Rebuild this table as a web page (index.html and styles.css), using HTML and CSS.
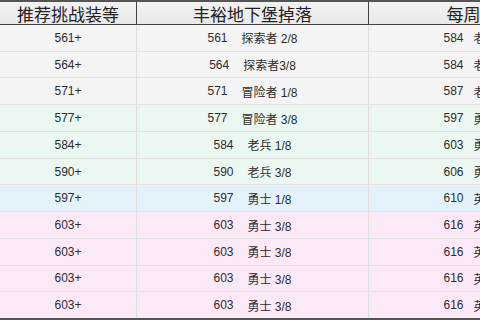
FILE: index.html
```html
<!DOCTYPE html>
<html lang="zh-CN">
<head>
<meta charset="utf-8">
<title>地下堡装等</title>
<link rel="stylesheet" href="styles.css">
</head>
<body>
<div class="table">
  <div class="head">
    <div class="hcell">推荐挑战装等</div>
    <div class="hcell">丰裕地下堡掉落</div>
    <div class="hcell">每周宝库</div>
  </div>
  <div class="row grey"><div class="cell">561+</div><div class="cell"><span class="num">561</span><span class="tier">探索者 2/8</span></div><div class="cell c3"><span class="num">584</span><span class="tier t3">老兵 2/8</span></div></div>
  <div class="row grey"><div class="cell">564+</div><div class="cell"><span class="num">564</span><span class="tier">探索者3/8</span></div><div class="cell c3"><span class="num">584</span><span class="tier t3">老兵 2/8</span></div></div>
  <div class="row grey"><div class="cell">571+</div><div class="cell"><span class="num">571</span><span class="tier">冒险者 1/8</span></div><div class="cell c3"><span class="num">587</span><span class="tier t3">老兵 3/8</span></div></div>
  <div class="row green"><div class="cell">577+</div><div class="cell"><span class="num">577</span><span class="tier">冒险者 3/8</span></div><div class="cell c3"><span class="num">597</span><span class="tier t3">勇士 1/8</span></div></div>
  <div class="row green"><div class="cell">584+</div><div class="cell"><span class="num">584</span><span class="tier">老兵 1/8</span></div><div class="cell c3"><span class="num">603</span><span class="tier t3">勇士 3/8</span></div></div>
  <div class="row green"><div class="cell">590+</div><div class="cell"><span class="num">590</span><span class="tier">老兵 3/8</span></div><div class="cell c3"><span class="num">606</span><span class="tier t3">勇士 4/8</span></div></div>
  <div class="row blue"><div class="cell">597+</div><div class="cell"><span class="num">597</span><span class="tier">勇士 1/8</span></div><div class="cell c3"><span class="num">610</span><span class="tier t3">英雄 1/8</span></div></div>
  <div class="row pink"><div class="cell">603+</div><div class="cell"><span class="num">603</span><span class="tier">勇士 3/8</span></div><div class="cell c3"><span class="num">616</span><span class="tier t3">英雄 3/8</span></div></div>
  <div class="row pink"><div class="cell">603+</div><div class="cell"><span class="num">603</span><span class="tier">勇士 3/8</span></div><div class="cell c3"><span class="num">616</span><span class="tier t3">英雄 3/8</span></div></div>
  <div class="row pink"><div class="cell">603+</div><div class="cell"><span class="num">603</span><span class="tier">勇士 3/8</span></div><div class="cell c3"><span class="num">616</span><span class="tier t3">英雄 3/8</span></div></div>
  <div class="row pink"><div class="cell">603+</div><div class="cell"><span class="num">603</span><span class="tier">勇士 3/8</span></div><div class="cell c3"><span class="num">616</span><span class="tier t3">英雄 3/8</span></div></div>
</div>
</body>
</html>
```

FILE: styles.css
```css
html, body {
  margin: 0;
  padding: 0;
  overflow: hidden;
  background: #ffffff;
}

.table {
  width: 600px;
  height: 320px;
  box-sizing: border-box;
  border-top: 2px solid #555555;
  border-bottom: 2px solid #555555;
  display: flex;
  flex-direction: column;
  font-family: "Liberation Sans", "Noto Sans CJK SC", sans-serif;
  color: #2c2c2c;
}

.head {
  height: 22px;
  flex: none;
  display: grid;
  grid-template-columns: 136px 232px 224px;
  border-bottom: 1px solid #444444;
  background: linear-gradient(#f1f1f1, #e9e9e9);
}

.hcell {
  display: flex;
  align-items: center;
  justify-content: center;
  font-family: "Noto Sans CJK SC", sans-serif;
  font-size: 17px;
  color: #222222;
  line-height: 1;
}

.hcell + .hcell {
  border-left: 1px solid #444444;
}

.row {
  flex: 1;
  display: grid;
  grid-template-columns: 136px 232px 224px;
  font-size: 12px;
}

.row + .row {
  border-top: 1px solid #e1e1e1;
}

.cell {
  display: flex;
  align-items: center;
  justify-content: center;
  white-space: nowrap;
}

.cell + .cell {
  border-left: 1px solid #dedede;
}

.tier {
  margin-left: 14px;
}

.tier.t3 {
  margin-left: 10px;
}

.grey { background: #f4f4f4; }
.green { background: #ebf8f1; }
.blue { background: #e4f3fb; }
.pink { background: #fce9f8; }
```
